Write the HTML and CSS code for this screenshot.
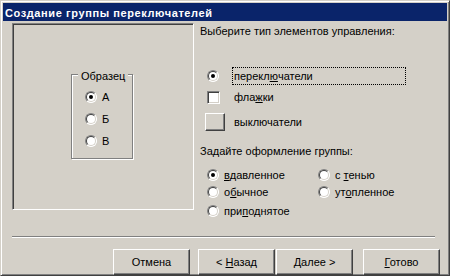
FILE: index.html
```html
<!DOCTYPE html>
<html lang="ru">
<head>
<meta charset="utf-8">
<title>Создание группы переключателей</title>
<link rel="stylesheet" href="styles.css">
</head>
<body>
<div class="window">
  <div class="titlebar">Создание группы переключателей</div>
  <div class="main">
    <div class="preview">
      <div class="groupbox">
        <span class="legend">Образец</span>
        <div class="sample-row"><span class="radio checked"></span><span>А</span></div>
        <div class="sample-row"><span class="radio"></span><span>Б</span></div>
        <div class="sample-row"><span class="radio"></span><span>В</span></div>
      </div>
    </div>
    <div class="options">
      <div class="heading">Выберите тип элементов управления:</div>
      <div class="type-row type-radio">
        <span class="ctl"><span class="radio checked"></span></span>
        <span class="lbl focused">перекл<u>ю</u>чатели</span>
      </div>
      <div class="type-row type-check">
        <span class="ctl"><span class="checkbox"></span></span>
        <span class="lbl">фла<u>ж</u>ки</span>
      </div>
      <div class="type-row type-toggle">
        <span class="ctl"><span class="toggle"></span></span>
        <span class="lbl">выключатели</span>
      </div>
      <div class="heading heading-style">Задайте оформление группы:</div>
      <div class="style-grid">
        <div class="opt"><span class="radio checked"></span><span><u>в</u>давленное</span></div>
        <div class="opt"><span class="radio"></span><span>с <u>т</u>енью</span></div>
        <div class="opt"><span class="radio"></span><span>о<u>б</u>ычное</span></div>
        <div class="opt"><span class="radio"></span><span>ут<u>о</u>пленное</span></div>
        <div class="opt"><span class="radio"></span><span>при<u>п</u>однятое</span></div>
      </div>
    </div>
  </div>
  <div class="separator"></div>
  <div class="buttons">
    <button class="btn btn-cancel">Отмена</button>
    <button class="btn btn-back">&lt; <u>Н</u>азад</button>
    <button class="btn btn-next"><u>Д</u>алее &gt;</button>
    <button class="btn btn-finish"><u>Г</u>отово</button>
  </div>
</div>
</body>
</html>
```
FILE: styles.css
```css
* { box-sizing: border-box; }
html, body { margin: 0; padding: 0; }
body {
  width: 450px;
  height: 276px;
  overflow: hidden;
  background: #d4d0c8;
  font-family: "Liberation Sans", Arial, sans-serif;
  font-size: 11px;
  color: #000;
}
.window {
  width: 450px;
  height: 276px;
  background: #d4d0c8;
  border: 1px solid;
  border-color: #d4d0c8 #404040 #404040 #d4d0c8;
  box-shadow: inset 1px 1px 0 #fff, inset -1px -1px 0 #808080;
  padding: 2px;
  display: flex;
  flex-direction: column;
}
.titlebar {
  height: 18px;
  flex-shrink: 0;
  background: #0a246a;
  color: #fff;
  font-weight: bold;
  letter-spacing: 0.6px;
  line-height: 13px;
  padding: 4px 0 0 2px;
  white-space: nowrap;
}
.main {
  display: flex;
  gap: 6px;
  margin-top: 2px;
  padding-left: 9px;
}
.preview {
  flex-shrink: 0;
  width: 182px;
  height: 187px;
  border: 1px solid;
  border-color: #808080 #fff #fff #808080;
  box-shadow: inset 1px 1px 0 #404040, inset -1px -1px 0 #d4d0c8;
  padding: 50px 0 0 58px;
}
.groupbox {
  position: relative;
  width: 62px;
  height: 85px;
  border: 1px solid #808080;
  box-shadow: inset 1px 1px 0 #fff, 1px 1px 0 #fff;
  padding: 16px 0 0 13px;
  display: flex;
  flex-direction: column;
  gap: 10px;
}
.legend {
  position: absolute;
  left: 6px;
  top: -5px;
  padding: 0 3px;
  background: #d4d0c8;
  line-height: 13px;
}
.sample-row {
  display: flex;
  align-items: center;
  gap: 5px;
  height: 12px;
  line-height: 12px;
}
.options {
  flex: 1;
  display: flex;
  flex-direction: column;
  padding-top: 2px;
}
.heading {
  line-height: 13px;
  white-space: nowrap;
}
.type-row {
  display: flex;
  align-items: center;
  height: 18px;
}
.type-radio { margin-top: 29px; }
.type-check { margin-top: 3px; }
.type-toggle { margin-top: 7px; }
.ctl {
  width: 20px;
  margin-left: 5px;
  margin-right: 7px;
  display: flex;
  align-items: center;
}
.ctl .radio, .ctl .checkbox { margin-left: 2px; }
.lbl {
  height: 18px;
  display: flex;
  align-items: center;
  border: 1px solid transparent;
  padding: 0 1px;
  line-height: 14px;
}
.lbl.focused {
  width: 174px;
  border: 1px dotted #000;
}
.heading-style { margin-top: 14px; }
.style-grid {
  display: grid;
  grid-template-columns: 111px auto;
  grid-template-rows: 17px 19px 14px;
  margin-top: 10px;
  padding-left: 7px;
}
.opt {
  display: flex;
  align-items: center;
  gap: 5px;
  height: 14px;
  line-height: 14px;
  white-space: nowrap;
}
.radio {
  display: inline-block;
  position: relative;
  flex-shrink: 0;
  width: 12px;
  height: 12px;
  border-radius: 50%;
  border: 1px solid;
  border-color: #808080 #fff #fff #808080;
  background: #fff;
}
.radio::before {
  content: "";
  position: absolute;
  inset: 0;
  border-radius: 50%;
  border: 1px solid;
  border-color: #404040 #d4d0c8 #d4d0c8 #404040;
}
.radio.checked::after {
  content: "";
  position: absolute;
  left: 3px;
  top: 3px;
  width: 4px;
  height: 4px;
  border-radius: 50%;
  background: #000;
}
.checkbox {
  display: inline-block;
  flex-shrink: 0;
  width: 13px;
  height: 13px;
  background: #fff;
  border: 1px solid;
  border-color: #808080 #fff #fff #808080;
  box-shadow: inset 1px 1px 0 #404040, inset -1px -1px 0 #d4d0c8;
}
.toggle, .btn {
  background: #d4d0c8;
  border: 1px solid;
  border-color: #fff #404040 #404040 #fff;
  box-shadow: inset -1px -1px 0 #808080, inset 1px 1px 0 #d4d0c8;
}
.toggle {
  display: inline-block;
  flex-shrink: 0;
  width: 20px;
  height: 18px;
}
.separator {
  height: 2px;
  margin: 18px 12px 0 9px;
  border-top: 1px solid #808080;
  border-bottom: 1px solid #fff;
}
.buttons {
  display: flex;
  justify-content: flex-end;
  margin-top: 11px;
  padding-right: 7px;
}
.btn {
  width: 77px;
  height: 26px;
  padding: 0;
  margin: 0;
  font-family: inherit;
  font-size: 11px;
  line-height: 13px;
  color: #000;
}
.btn-cancel { margin-right: 8px; }
.btn-back { margin-right: 1px; }
.btn-next { margin-right: 10px; }
```
